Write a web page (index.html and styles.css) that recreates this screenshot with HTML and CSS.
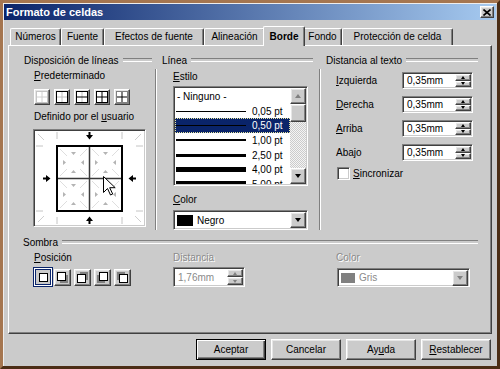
FILE: index.html
```html
<!DOCTYPE html>
<html lang="es">
<head>
    <meta charset="UTF-8">
    <title>Formato de celdas</title>
    <link rel="stylesheet" href="styles.css">
</head>
<body>
<div class="window">
    <div class="titlebar">
        <span class="title">Formato de celdas</span>
        <span class="close raised">
            <svg width="8" height="7" viewBox="0 0 8 7"><path d="M0.5 0.5L7.5 6.5M7.5 0.5L0.5 6.5" stroke="#000" stroke-width="1.6"/></svg>
        </span>
    </div>

    <div class="tabs">
        <div class="tab t-num">Números</div>
        <div class="tab t-fuente">Fuente</div>
        <div class="tab t-efectos">Efectos de fuente</div>
        <div class="tab t-alin">Alineación</div>
        <div class="tab t-borde active">Borde</div>
        <div class="tab t-fondo">Fondo</div>
        <div class="tab t-prot">Protección de celda</div>
    </div>

    <div class="panel">
        <div class="top">
            <!-- Disposición de líneas -->
            <div class="col col-lines">
                <div class="legend">Disposición de líneas</div>
                <div class="body">
                    <div class="label"><u>P</u>redeterminado</div>
                    <div class="presets">
                        <span class="preset raised"><svg width="12" height="12" viewBox="0 0 12 12"><rect x="0.5" y="0.5" width="11" height="11" fill="#fff" stroke="#c4c4c4"/><path d="M6 1v10M1 6h10" stroke="#d0d0d0"/></svg></span>
                        <span class="preset raised"><svg width="12" height="12" viewBox="0 0 12 12"><rect x="0.5" y="0.5" width="11" height="11" fill="#fff" stroke="#000"/><path d="M6 1v10M1 6h10" stroke="#c0c0c0"/></svg></span>
                        <span class="preset raised"><svg width="12" height="12" viewBox="0 0 12 12"><rect x="0.5" y="0.5" width="11" height="11" fill="#fff" stroke="#000"/><path d="M6 1v10" stroke="#c0c0c0"/><path d="M1 6h10" stroke="#000"/></svg></span>
                        <span class="preset raised"><svg width="12" height="12" viewBox="0 0 12 12"><rect x="0.5" y="0.5" width="11" height="11" fill="#fff" stroke="#000"/><path d="M6 1v10M1 6h10" stroke="#000"/></svg></span>
                        <span class="preset raised"><svg width="12" height="12" viewBox="0 0 12 12"><rect x="0.5" y="0.5" width="11" height="11" fill="#fff" stroke="#808080"/><path d="M6 1v10M1 6h10" stroke="#000"/></svg></span>
                    </div>
                    <div class="label label-user">Definido por el <u>u</u>suario</div>
                    <div class="canvas sunken">
                        <svg width="109" height="94" viewBox="0 0 109 94">
                            <defs>
                                <g id="cell">
                                    <path d="M2 2l7 7M29 2l-7 7M2 29l7-7M29 29l-7-7" stroke="#dedede"/>
                                    <path d="M13 5h5l-2.5 3zM13 26h5l-2.5-3zM5 13v5l3-2.5zM26 13v5l-3-2.5z" fill="#b4b4b4"/>
                                </g>
                                <path id="arrow" d="M-1 -4h2v3h2.5L0 3.5-3.5-1H-1z" fill="#000"/>
                            </defs>
                            <path d="M3 3l6 6M106 3l-6 6M3 91l6-6M106 91l-6-6" stroke="#cfcfcf"/>
                            <path d="M22 1v7M87 1v7M22 86v7M87 86v7M1 15h7M1 80h7M101 15h7M101 80h7" stroke="#c4c4c4"/>
                            <use href="#cell" x="23" y="16"/>
                            <use href="#cell" x="55" y="16"/>
                            <use href="#cell" x="23" y="48"/>
                            <use href="#cell" x="55" y="48"/>
                            <path d="M54.5 16v64M23 47.5h64" stroke="#3a3a3a" stroke-width="1.5"/>
                            <rect x="22" y="15" width="65" height="65" fill="none" stroke="#000" stroke-width="2"/>
                            <use href="#arrow" transform="translate(54.5 5)"/>
                            <use href="#arrow" transform="translate(54.5 89) rotate(180)"/>
                            <use href="#arrow" transform="translate(12 47.5) rotate(-90)"/>
                            <use href="#arrow" transform="translate(97 47.5) rotate(90)"/>
                            <path d="M68.5 45.5v16l4-4 3 6.5 2.2-1-3-6.3h5.5z" fill="#fff" stroke="#000" stroke-linejoin="round"/>
                        </svg>
                    </div>
                </div>
            </div>

            <!-- Línea -->
            <div class="col col-line">
                <div class="legend">Línea</div>
                <div class="body">
                    <div class="label"><u>E</u>stilo</div>
                    <div class="listbox sunken">
                        <div class="items">
                            <div class="item">- Ninguno -</div>
                            <div class="item"><i class="ln w1"></i>0,05 pt</div>
                            <div class="item sel"><i class="ln w1"></i>0,50 pt</div>
                            <div class="item"><i class="ln w2"></i>1,00 pt</div>
                            <div class="item"><i class="ln w3"></i>2,50 pt</div>
                            <div class="item"><i class="ln w5"></i>4,00 pt</div>
                            <div class="item"><i class="ln w6"></i>5,00 pt</div>
                        </div>
                        <div class="vscroll">
                            <span class="sbtn raised"><i class="tri up off"></i></span>
                            <span class="thumb raised"></span>
                            <span class="track"></span>
                            <span class="sbtn raised"><i class="tri down"></i></span>
                        </div>
                    </div>
                    <div class="label label-color"><u>C</u>olor</div>
                    <div class="dropdown sunken">
                        <span class="swatch black"></span>
                        <span class="dd-text">Negro</span>
                        <span class="dd-btn raised"><i class="tri down"></i></span>
                    </div>
                </div>
            </div>

            <!-- Distancia al texto -->
            <div class="col col-dist">
                <div class="legend">Distancia al texto</div>
                <div class="body">
                    <div class="row">
                        <span class="row-label"><u>I</u>zquierda</span>
                        <div class="spin sunken"><span class="val">0,35mm</span><span class="spin-btns"><span class="sb raised"><i class="tri up small"></i></span><span class="sb raised"><i class="tri down small"></i></span></span></div>
                    </div>
                    <div class="row">
                        <span class="row-label"><u>D</u>erecha</span>
                        <div class="spin sunken"><span class="val">0,35mm</span><span class="spin-btns"><span class="sb raised"><i class="tri up small"></i></span><span class="sb raised"><i class="tri down small"></i></span></span></div>
                    </div>
                    <div class="row">
                        <span class="row-label"><u>A</u>rriba</span>
                        <div class="spin sunken"><span class="val">0,35mm</span><span class="spin-btns"><span class="sb raised"><i class="tri up small"></i></span><span class="sb raised"><i class="tri down small"></i></span></span></div>
                    </div>
                    <div class="row">
                        <span class="row-label">Abajo</span>
                        <div class="spin sunken"><span class="val">0,35mm</span><span class="spin-btns"><span class="sb raised"><i class="tri up small"></i></span><span class="sb raised"><i class="tri down small"></i></span></span></div>
                    </div>
                    <div class="check-row">
                        <span class="checkbox sunken"></span>
                        <span><u>S</u>incronizar</span>
                    </div>
                </div>
            </div>
        </div>

        <!-- Sombra -->
        <div class="shadow">
            <div class="legend">Sombra</div>
            <div class="shadow-body">
                <div>
                    <div class="label"><u>P</u>osición</div>
                    <div class="shadow-presets">
                        <span class="spreset sel"><svg width="11" height="11" viewBox="0 0 11 11"><rect x="1.5" y="1.5" width="8" height="8" fill="#fff" stroke="#000"/></svg></span>
                        <span class="spreset raised"><svg width="11" height="11" viewBox="0 0 11 11"><rect x="3" y="3" width="8" height="8" fill="#808080"/><rect x="0.5" y="0.5" width="8" height="8" fill="#fff" stroke="#000"/></svg></span>
                        <span class="spreset raised"><svg width="11" height="11" viewBox="0 0 11 11"><rect x="3" y="0" width="8" height="8" fill="#808080"/><rect x="0.5" y="2.5" width="8" height="8" fill="#fff" stroke="#000"/></svg></span>
                        <span class="spreset raised"><svg width="11" height="11" viewBox="0 0 11 11"><rect x="0" y="3" width="8" height="8" fill="#808080"/><rect x="2.5" y="0.5" width="8" height="8" fill="#fff" stroke="#000"/></svg></span>
                        <span class="spreset raised"><svg width="11" height="11" viewBox="0 0 11 11"><rect x="0" y="0" width="8" height="8" fill="#808080"/><rect x="2.5" y="2.5" width="8" height="8" fill="#fff" stroke="#000"/></svg></span>
                    </div>
                </div>
                <div>
                    <div class="label disabled">Distancia</div>
                    <div class="spin spin-off sunken"><span class="val">1,76mm</span><span class="spin-btns"><span class="sb raised"><i class="tri up small off"></i></span><span class="sb raised"><i class="tri down small off"></i></span></span></div>
                </div>
                <div>
                    <div class="label disabled">Color</div>
                    <div class="dropdown dropdown-off sunken">
                        <span class="swatch grey"></span>
                        <span class="dd-text">Gris</span>
                        <span class="dd-btn raised"><i class="tri down off"></i></span>
                    </div>
                </div>
            </div>
        </div>
    </div>

    <div class="buttons">
        <button class="btn default">Aceptar</button>
        <button class="btn">Cancelar</button>
        <button class="btn">Ay<u>u</u>da</button>
        <button class="btn"><u>R</u>establecer</button>
    </div>
</div>
</body>
</html>
```

FILE: styles.css
```css
* {
    box-sizing: border-box;
}

body {
    margin: 0;
    font-family: "Liberation Sans", Arial, sans-serif;
    font-size: 10px;
    color: #000;
    background: #cbcbcb;
}

u {
    text-decoration: underline;
    text-underline-offset: 1px;
}

/* 3D helpers */
.raised {
    background: #cbcbcb;
    border: 1px solid;
    border-color: #fff #404040 #404040 #fff;
    box-shadow: inset -1px -1px #808080, inset 1px 1px #e6e6e6;
}

.sunken {
    background: #fff;
    border: 1px solid;
    border-color: #808080 #fff #fff #808080;
    box-shadow: inset 1px 1px #404040, inset -1px -1px #cbcbcb;
    padding: 1px;
}

.tri {
    display: block;
    width: 0;
    height: 0;
    border-left: 3.5px solid transparent;
    border-right: 3.5px solid transparent;
}

.tri.down {
    border-top: 4px solid #000;
}

.tri.up {
    border-bottom: 4px solid #000;
}

.tri.small {
    border-left-width: 2.5px;
    border-right-width: 2.5px;
    border-top-width: 3px;
    border-bottom-width: 3px;
}

.tri.up.off {
    border-bottom-color: #808080;
}

.tri.down.off {
    border-top-color: #808080;
}

/* window */
.window {
    width: 500px;
    height: 369px;
    border: 3px solid;
    border-color: #a57650 #4b2d15 #4b2d15 #a57650;
    background: #cbcbcb;
    padding: 1px;
    box-shadow: inset 1px 1px #eeeeee;
}

.titlebar {
    height: 16px;
    display: flex;
    align-items: center;
    justify-content: space-between;
    padding: 0 2px;
    background: linear-gradient(90deg, #0a246a, #a6caf0);
    color: #fff;
    font-weight: bold;
    font-size: 11px;
}

.close {
    width: 14px;
    height: 12px;
    display: flex;
    align-items: center;
    justify-content: center;
}

/* tabs */
.tabs {
    display: flex;
    align-items: flex-end;
    height: 19px;
    margin-top: 6px;
    padding-left: 6px;
}

.tab {
    height: 17px;
    line-height: 16px;
    text-align: center;
    white-space: nowrap;
    border-top: 1px solid #fff;
    border-left: 1px solid #fff;
    border-right: 1px solid #404040;
    border-radius: 2px 2px 0 0;
    box-shadow: inset -1px 0 #808080;
}

.tab.active {
    position: relative;
    z-index: 1;
    height: 20px;
    line-height: 19px;
    margin: 0 -2px -1px;
    background: #cbcbcb;
    font-weight: bold;
}

.t-num { width: 51px; }
.t-fuente { width: 43px; }
.t-efectos { width: 100px; }
.t-alin { width: 61px; }
.t-borde { width: 42px; }
.t-fondo { width: 39px; }
.t-prot { width: 111px; }

/* panel */
.panel {
    margin: 0 4px;
    height: 289px;
    border: 1px solid;
    border-color: #fff #404040 #404040 #fff;
    box-shadow: inset -1px -1px #808080;
}

.top {
    display: grid;
    grid-template-columns: 146px 164px 1fr;
    height: 184px;
}

.col {
    padding-top: 8px;
}

.legend {
    display: flex;
    align-items: center;
    height: 12px;
    white-space: nowrap;
}

.legend::after {
    content: "";
    flex: 1;
    height: 2px;
    margin-left: 4px;
    border-top: 1px solid #808080;
    border-bottom: 1px solid #fff;
}

.label {
    line-height: 12px;
    height: 12px;
    white-space: nowrap;
}

.disabled {
    color: #8a8a8a;
    text-shadow: 1px 1px #fff;
}

.col .body {
    margin-top: 3px;
    height: 161px;
}

/* disposición */
.col-lines .legend {
    margin: 0 3px 0 15px;
}

.col-lines .body {
    padding: 1px 0 0 25px;
}

.presets {
    display: flex;
    gap: 4px;
    margin-top: 7px;
}

.preset {
    width: 16px;
    height: 16px;
    display: flex;
    align-items: center;
    justify-content: center;
}

.label-user {
    margin-top: 6px;
}

.canvas {
    width: 113px;
    height: 98px;
    margin: 6px 0 0 -1px;
}

.canvas svg {
    display: block;
}

/* línea */
.col-line .legend {
    margin: 0 6px 0 7px;
}

.col-line .body,
.col-dist .body {
    border-left: 1px solid #808080;
    box-shadow: inset 1px 0 #fff;
}

.col-line .body {
    padding: 2px 0 0 17px;
}

.listbox {
    display: flex;
    width: 135px;
    height: 100px;
    margin-top: 3px;
    overflow: hidden;
}

.items {
    flex: 1;
    padding-top: 1px;
    overflow: hidden;
}

.item {
    display: flex;
    align-items: center;
    height: 14.7px;
    padding-left: 2px;
    white-space: nowrap;
}

.item.sel {
    background: #0a246a;
    color: #fff;
    outline: 1px dotted #e8e8a0;
    outline-offset: -1px;
}

.ln {
    display: block;
    width: 70px;
    margin: 0 6px 0 -1px;
    background: #000;
}

.w1 { height: 1px; }
.w2 { height: 2px; }
.w3 { height: 3px; }
.w5 { height: 5px; }
.w6 { height: 6px; }

.vscroll {
    width: 16px;
    display: flex;
    flex-direction: column;
    background: repeating-conic-gradient(#f4f4f4 0 25%, #cbcbcb 0 50%) 0 0 / 2px 2px;
}

.sbtn {
    height: 16px;
    display: flex;
    align-items: center;
    justify-content: center;
}

.thumb {
    height: 18px;
}

.track {
    flex: 1;
}

.label-color {
    margin-top: 8px;
}

.dropdown {
    display: flex;
    align-items: center;
    width: 135px;
    height: 20px;
    margin-top: 4px;
}

.swatch {
    width: 16px;
    height: 11px;
    margin-left: 2px;
}

.swatch.black {
    background: #000;
}

.swatch.grey {
    width: 14px;
    height: 10px;
    background: #808080;
}

.dd-text {
    flex: 1;
    margin-left: 4px;
}

.dd-btn {
    width: 16px;
    height: 16px;
    display: flex;
    align-items: center;
    justify-content: center;
}

/* distancia al texto */
.col-dist .legend {
    margin: 0 13px 0 7px;
}

.col-dist .body {
    padding: 3px 0 0 16px;
}

.row {
    display: flex;
    align-items: center;
    height: 17px;
    margin-bottom: 7px;
}

.row-label {
    width: 66px;
}

.spin {
    display: flex;
    align-items: center;
    width: 71px;
    height: 17px;
}

.spin .val {
    flex: 1;
    padding-left: 3px;
}

.spin-btns {
    display: flex;
    flex-direction: column;
    width: 16px;
    height: 100%;
}

.sb {
    flex: 1;
    display: flex;
    align-items: center;
    justify-content: center;
}

.check-row {
    display: flex;
    align-items: center;
    gap: 3px;
    margin: -1px 0 0 1px;
}

.checkbox {
    width: 13px;
    height: 13px;
}

/* sombra */
.shadow {
    padding: 6px 13px 0 14px;
}

.shadow-body {
    display: grid;
    grid-template-columns: 139px 163px 1fr;
    padding-left: 11px;
    margin-top: 4px;
}

.shadow-presets {
    display: flex;
    align-items: center;
    gap: 3px;
    margin-top: 3px;
    height: 20px;
}

.spreset {
    width: 17px;
    height: 17px;
    display: flex;
    align-items: center;
    justify-content: center;
}

.spreset.sel {
    width: 20px;
    height: 20px;
    margin: 0 -2px 0 -1px;
    border: 1px solid #0a246a;
    background: #cbcbcb;
    box-shadow: inset 0 0 0 1px #fff, inset 0 0 0 2px #0a246a;
}

.spin-off {
    width: 72px;
    height: 20px;
    margin-top: 3px;
    color: #8a8a8a;
}

.dropdown-off {
    width: 133px;
    height: 19px;
    margin: 4px 0 0 1px;
    color: #8a8a8a;
}

/* botones */
.buttons {
    display: flex;
    justify-content: flex-end;
    gap: 5px;
    margin-top: 5px;
    padding-right: 5px;
}

.btn {
    width: 70px;
    height: 21px;
    padding: 0;
    font-family: inherit;
    font-size: 10px;
    color: #000;
    background: #cbcbcb;
    border: 1px solid;
    border-color: #fff #404040 #404040 #fff;
    box-shadow: inset -1px -1px #808080, inset 1px 1px #e6e6e6;
}

.btn.default {
    border: 1px solid #000;
    box-shadow: inset 1px 1px #fff, inset -1px -1px #404040, inset -2px -2px #808080;
}
```
